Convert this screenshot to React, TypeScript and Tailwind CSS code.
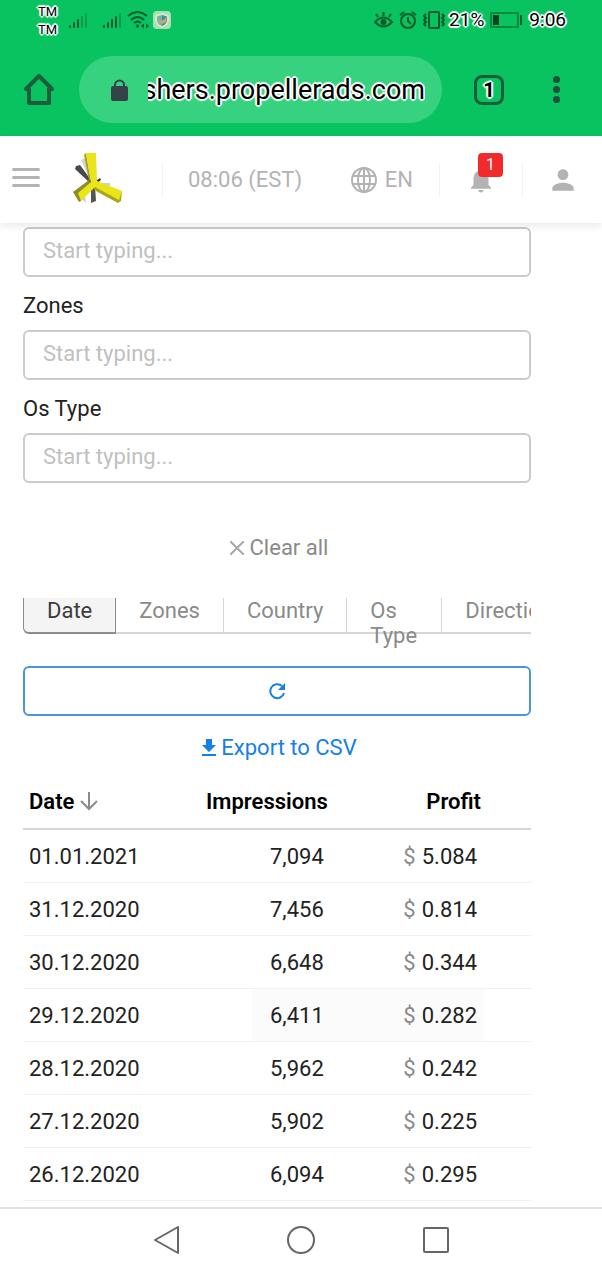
import React from 'react';
import { MdPerson, MdNotifications } from 'react-icons/md';

const fields = [
  { id: 'country', label: '' },
  { id: 'zones', label: 'Zones' },
  { id: 'os-type', label: 'Os Type' },
];

const rows = [
  { date: '01.01.2021', impressions: '7,094', profit: '5.084' },
  { date: '31.12.2020', impressions: '7,456', profit: '0.814' },
  { date: '30.12.2020', impressions: '6,648', profit: '0.344' },
  { date: '29.12.2020', impressions: '6,411', profit: '0.282', active: true },
  { date: '28.12.2020', impressions: '5,962', profit: '0.242' },
  { date: '27.12.2020', impressions: '5,902', profit: '0.225' },
  { date: '26.12.2020', impressions: '6,094', profit: '0.295' },
];

const outlined = '[text-shadow:1px_1px_1px_#fff,-1px_-1px_1px_#fff,1px_-1px_1px_#fff,-1px_1px_1px_#fff,0_2px_1px_#fff,0_-2px_1px_#fff,2px_0_1px_#fff,-2px_0_1px_#fff]';

const Signal = ({ bars }: { bars: number }) => (
  <svg width="18" height="18" viewBox="0 0 18 18" fill="#075c2c">
    {[0, 1, 2, 3, 4].map((i) => (
      <rect key={i} x={i * 4} y={14 - i * 3} width="2" height={3 + i * 3} rx="1" opacity={i < bars ? 1 : 0.35} />
    ))}
  </svg>
);

const StatusBar = () => (
  <div className="flex h-10 items-center pl-[38px] pr-9 text-black">
    <div className={`mr-3 flex flex-col pt-0.5 text-[13px] leading-[18px] ${outlined}`}>
      <span>TM</span>
      <span>TM</span>
    </div>
    <Signal bars={3} />
    <span className="w-4" />
    <Signal bars={4} />
    <svg className="ml-1.5" width="22" height="18" viewBox="0 0 22 18" fill="none" stroke="#075c2c" strokeWidth="2">
      <path d="M1 5Q10.500-3 20 5M4 9Q10.500 3 17 9M7 12Q10.500 9 14 12" />
      <path d="M10.500 13l2 2-2 2-2-2z" fill="#075c2c" stroke="none" />
      <path d="M14 15l3-2.500v5zM22 15l-3-2.500v5z" fill="#075c2c" stroke="none" />
    </svg>
    <svg className="ml-1" width="18" height="18" viewBox="0 0 18 18">
      <rect width="18" height="18" rx="4" fill="#a9dfb5" />
      <path d="M9 2l7 2.500V9q0 5-7 8-7-3-7-8V4.500z" fill="#dbe6c8" />
      <path d="M9 4l5 1.500V9q0 4-5 6z" fill="#3f94a0" />
      <path d="M9 4L4 5.500V9q0 4 5 6z" fill="#6cb5b0" />
      <path d="M4 8q5 4 10-2l-1 5q-3 3-7 1z" fill="#c9a968" />
    </svg>
    <div className="ml-auto flex items-center">
      <svg width="19" height="18" viewBox="0 0 19 18" fill="none" stroke="#075c2c" strokeWidth="2">
        <path d="M1 11q8.500-9 17 0-8.500 9-17 0zM9.500 5V1M4 6L2 3M15 6l2-3" />
        <circle cx="9.500" cy="11" r="3" fill="#075c2c" stroke="none" />
      </svg>
      <svg className="ml-1.5" width="18" height="18" viewBox="0 0 18 18" fill="none" stroke="#075c2c" strokeWidth="2">
        <circle cx="9" cy="10" r="7" />
        <path d="M9 6v4l3 3M1 4l4-3M17 4l-4-3" />
      </svg>
      <svg className="ml-1.5" width="22" height="18" viewBox="0 0 22 18" fill="none" stroke="#075c2c" strokeWidth="2">
        <rect x="6" y="1" width="10" height="16" rx="1" />
        <path d="M3 3l-2 2 2 2-2 2 2 2-2 2 2 2M19 3l2 2-2 2 2 2-2 2 2 2-2 2" />
      </svg>
      <span className={`ml-1 text-[19px] ${outlined}`}>21%</span>
      <svg className="ml-1.5" width="33" height="16" viewBox="0 0 33 16">
        <rect x="1" y="1" width="27" height="14" fill="none" stroke="#078a3e" strokeWidth="2" />
        <rect x="3" y="3" width="6" height="10" fill="#06431f" />
        <rect x="30" y="3" width="2" height="10" fill="#06602d" />
      </svg>
      <span className={`ml-1.5 text-[19px] ${outlined}`}>9:06</span>
    </div>
  </div>
);

const BrowserBar = () => (
  <div className="flex h-24 items-center pl-6 pr-[42px] pt-[3px]">
    <button aria-label="Home">
      <svg width="30" height="31" viewBox="0 0 30 31" fill="none" stroke="#1f5c3c" strokeWidth="4" strokeLinejoin="round" strokeLinecap="round">
        <path d="M2 15L15 2l13 13h-3v14H5V15z" />
      </svg>
    </button>
    <div className="ml-[25px] flex h-[67px] min-w-0 flex-1 items-center rounded-full bg-[#37d280] pl-8 pr-[17px]">
      <svg className="shrink-0" width="17" height="22" viewBox="0 0 17 22">
        <path d="M4 8V6a4.500 4.500 0 0 1 9 0v2" fill="none" stroke="#354348" strokeWidth="2" />
        <rect y="7" width="17" height="15" rx="2" fill="#354348" />
      </svg>
      <div className="ml-5 flex min-w-0 flex-1 justify-end overflow-hidden">
        <span className={`whitespace-nowrap text-[27px] leading-10 text-black ${outlined}`}>shers.propellerads.com</span>
      </div>
    </div>
    <button aria-label="Tabs" className={`ml-8 flex size-[30px] items-center justify-center rounded-lg border-3 border-[#1f5c3c] text-xl font-bold text-black ${outlined}`}>
      1
    </button>
    <button aria-label="Menu" className="ml-[47px] flex flex-col gap-[3px] pl-0.5">
      <span className="size-[7px] rounded-full bg-[#20503c]" />
      <span className="size-[7px] rounded-full bg-[#20503c]" />
      <span className="size-[7px] rounded-full bg-[#20503c]" />
    </button>
  </div>
);

const Logo = () => (
  <svg width="50" height="52" viewBox="0 0 50 52">
    <path d="M8 8l4-2 8 24-4-5z" fill="#d4d4d4" />
    <path d="M2 17l1-3 4-1 11 15v4z" fill="#4a4a4a" />
    <path d="M20 31l7-5 1 2-6 5z" fill="#333" />
    <path d="M22 33l5-2h10v4l-6 2z" fill="#cfcfcf" />
    <path d="M9 47l3-3 1 7z" fill="#ccc" />
    <path d="M18 34h4l1 15-5 2z" fill="#555" />
    <path d="M11 3l2-2 5 29-2-2z" fill="#a7a51c" />
    <path d="M13 1h10l1 28 25 10-3 10-25-13-13 13-5-8 15-11z" fill="#e9e518" />
    <path d="M0 40l16-12 1 3L5 41l3 8-2 1z" fill="#8f8c2a" />
    <path d="M22 35l24 13 3-9-1 10-3 2-24-13z" fill="#a7a51c" />
  </svg>
);

const SiteHeader = () => (
  <header className="relative flex h-[87px] items-center bg-white pl-3 pr-[23px] text-[22px] text-[#b3b3b3] shadow-[0_3px_8px_rgba(0,0,0,0.09)]">
    <button aria-label="Open menu" className="flex flex-col gap-[5px] pb-1">
      <span className="h-[3px] w-7 rounded-full bg-[#b3b3b3]" />
      <span className="h-[3px] w-7 rounded-full bg-[#b3b3b3]" />
      <span className="h-[3px] w-7 rounded-full bg-[#b3b3b3]" />
    </button>
    <a href="#" aria-label="PropellerAds" className="ml-[33px] pb-1">
      <Logo />
    </a>
    <span className="ml-[39px] h-8 w-px bg-[#f2f2f2]" />
    <span className="ml-[25px] whitespace-nowrap">08:06 (EST)</span>
    <button className="ml-auto flex items-center gap-2">
      <svg width="26" height="26" viewBox="0 0 26 26" fill="none" stroke="#b3b3b3" strokeWidth="2">
        <circle cx="13" cy="13" r="12" />
        <ellipse cx="13" cy="13" rx="6" ry="12" />
        <path d="M13 1v24M2 9h22M2 17h22" />
      </svg>
      EN
    </button>
    <span className="ml-[26px] h-8 w-px bg-[#f2f2f2]" />
    <button aria-label="Notifications" className="relative ml-[26px]">
      <MdNotifications className="size-[30px]" />
      <span className="absolute -top-3 left-3 flex h-6 w-[25px] items-center justify-center rounded bg-[#f12a2c] text-base text-white">1</span>
    </button>
    <span className="ml-[26px] h-8 w-px bg-[#f2f2f2]" />
    <button aria-label="Account" className="ml-6">
      <MdPerson className="size-8" />
    </button>
  </header>
);

const tab = 'flex h-full shrink-0 items-start border-b-2 border-r border-[#d6d6d6] px-[23px] text-left leading-[25px] text-[#8a8a8a]';

const GroupTabs = () => (
  <div className="mt-[34px] overflow-x-clip">
    <div className="flex h-9 items-start">
      <button className="flex h-full shrink-0 items-start rounded-bl-md border border-b-2 border-t-0 border-[#8c8c8c] bg-[#f4f4f4] px-[23px] leading-[25px] text-[#3c3c3c]">Date</button>
      <button className={tab}>Zones</button>
      <button className={tab}>Country</button>
      <button className={`${tab} w-[95px]`}>Os Type</button>
      <button className={tab}>Direction</button>
    </div>
  </div>
);

const ReportTable = () => (
  <table className="mt-[11px] w-full table-fixed text-[22px]">
    <thead>
      <tr className="h-[54px] border-b-2 border-[#d6d6d6] text-black">
        <th className="w-[30%] pl-1.5 text-left font-semibold">
          <span className="flex items-center gap-1.5">
            Date
            <svg width="18" height="19" viewBox="0 0 18 19" fill="none" stroke="#8a8a8a" strokeWidth="2">
              <path d="M9 0v17M1 9l8 8 8-8" />
            </svg>
          </span>
        </th>
        <th className="w-[30%] text-right font-semibold">Impressions</th>
        <th className="pr-[50px] text-right font-semibold">Profit</th>
      </tr>
    </thead>
    <tbody>
      {rows.map((row) => (
        <tr key={row.date} className="h-[53px] border-b border-[#f1f1f1] text-[#222]">
          <td className="pl-1.5">{row.date}</td>
          <td>
            <div className={`ml-auto flex h-[52px] w-[76px] items-center justify-end pr-1 ${row.active ? 'bg-[#fbfbfb]' : ''}`}>
              {row.impressions}
            </div>
          </td>
          <td>
            <div className={`mr-[46px] flex h-[52px] items-center justify-end gap-1.5 pr-2 ${row.active ? 'bg-[#fbfbfb]' : ''}`}>
              <span className="text-[#8a8a8a]">$</span>
              <span>{row.profit}</span>
            </div>
          </td>
        </tr>
      ))}
    </tbody>
  </table>
);

const NavBar = () => (
  <nav className="flex h-16 items-center justify-center gap-[108px] border-t-2 border-[#e2e2e2] bg-white">
    <button aria-label="Back">
      <svg width="26" height="28" viewBox="0 0 26 28" fill="none" stroke="#666" strokeWidth="2" strokeLinejoin="round">
        <path d="M25 1v26L2 14z" />
      </svg>
    </button>
    <button aria-label="Home screen">
      <svg width="28" height="28" viewBox="0 0 28 28" fill="none" stroke="#666" strokeWidth="2">
        <circle cx="14" cy="14" r="13" />
      </svg>
    </button>
    <button aria-label="Recent apps">
      <svg width="26" height="26" viewBox="0 0 26 26" fill="none" stroke="#666" strokeWidth="2">
        <rect x="1" y="1" width="24" height="24" rx="1" />
      </svg>
    </button>
  </nav>
);

export default function App() {
  return (
    <div className="flex min-h-screen flex-col bg-white font-['Roboto',sans-serif]">
      <div className="bg-[#08c35f]">
        <StatusBar />
        <BrowserBar />
      </div>
      <SiteHeader />
      <main className="flex-1 pl-[23px] pr-[71px] pt-1 text-[22px]">
        {fields.map((field) => (
          <div key={field.id}>
            {field.label && (
              <label htmlFor={field.id} className="flex h-[53px] items-center pt-1 text-[#222]">{field.label}</label>
            )}
            <input
              id={field.id}
              aria-label={field.label || 'Country'}
              placeholder="Start typing..."
              className="block h-[50px] w-full rounded-md border-2 border-[#cbcbcb] px-[18px] pb-1 placeholder:text-[#c0c0c0]"
            />
          </div>
        ))}
        <button className="mx-auto mt-12 flex items-center gap-1.5 pl-1 text-[#8a8a8a]">
          <svg width="14" height="14" viewBox="0 0 14 14" stroke="#a8a8a8" strokeWidth="2">
            <path d="M0 0l14 14M14 0L0 14" />
          </svg>
          Clear all
        </button>
        <GroupTabs />
        <button aria-label="Refresh" className="mt-8 flex h-[50px] w-full items-center justify-center rounded-md border-2 border-[#4a95dc] text-[#1480e8]">
          <svg width="18" height="18" viewBox="0 0 18 18">
            <path d="M14 4a7 7 0 1 0 2 7" fill="none" stroke="currentColor" strokeWidth="2" />
            <path d="M17 1v7h-7z" fill="currentColor" />
          </svg>
        </button>
        <a href="#" className="mx-auto mt-[15px] flex w-fit items-center gap-1 pl-1 text-[#1480e8]">
          <svg width="16" height="20" viewBox="0 0 16 20" fill="currentColor">
            <path d="M5 1h6v6h4l-7 7-7-7h4zM1 16h14v2H1z" />
          </svg>
          Export to CSV
        </a>
        <ReportTable />
      </main>
      <NavBar />
    </div>
  );
}
